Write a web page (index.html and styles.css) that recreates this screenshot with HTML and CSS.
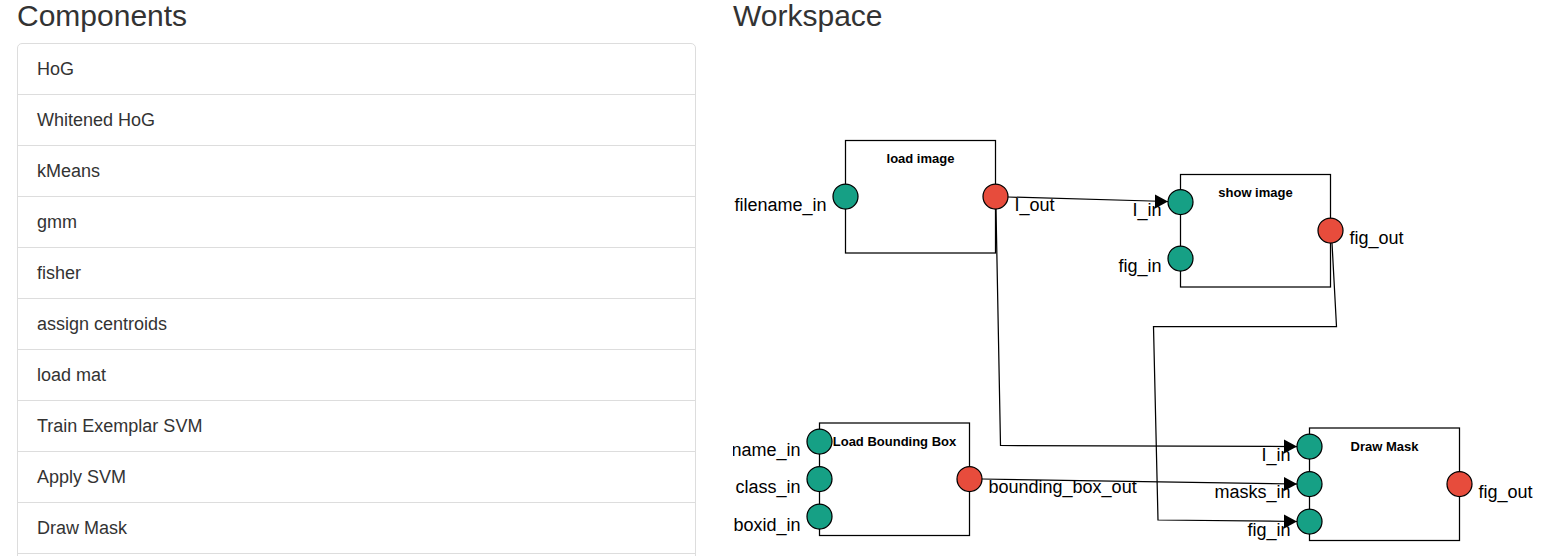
FILE: index.html
```
<!DOCTYPE html>
<html lang="en">
<head>
<meta charset="utf-8">
<title>Workspace</title>
<link rel="stylesheet" href="styles.css">
</head>
<body>
<main class="layout">
  <section class="panel">
    <h3 class="heading">Components</h3>
    <ul class="list">
      <li class="item">HoG</li>
      <li class="item">Whitened HoG</li>
      <li class="item">kMeans</li>
      <li class="item">gmm</li>
      <li class="item">fisher</li>
      <li class="item">assign centroids</li>
      <li class="item">load mat</li>
      <li class="item">Train Exemplar SVM</li>
      <li class="item">Apply SVM</li>
      <li class="item">Draw Mask</li>
      <li class="item"></li>
    </ul>
  </section>
  <section class="panel">
    <h3 class="heading">Workspace</h3>
    <svg class="canvas" role="group" aria-label="Workspace diagram">
      <defs>
        <marker id="arrow" markerUnits="userSpaceOnUse" markerWidth="14" markerHeight="16" refX="13" refY="7.5">
          <path d="M0 0.5L13 7.5L0 14.5Z"/>
        </marker>
      </defs>

      <g class="node" transform="translate(112.5 97.5)">
        <rect class="box" width="150" height="112.5"/>
        <text class="title" x="75" y="22">load image</text>
        <text class="label label-in" x="-19" y="70">filename_in</text>
        <text class="label" x="169" y="70">I_out</text>
      </g>
      <g class="node" transform="translate(447.5 131.5)">
        <rect class="box" width="150" height="112.5"/>
        <text class="title" x="75" y="22">show image</text>
        <text class="label label-in" x="-19" y="41">I_in</text>
        <text class="label label-in" x="-19" y="97">fig_in</text>
        <text class="label" x="169" y="69">fig_out</text>
      </g>
      <g class="node" transform="translate(86.5 380)">
        <rect class="box" width="150" height="112.5"/>
        <text class="title" x="75" y="23">Load Bounding Box</text>
        <text class="label label-in" x="-19" y="33">name_in</text>
        <text class="label label-in" x="-19" y="70">class_in</text>
        <text class="label label-in" x="-19" y="108">boxid_in</text>
        <text class="label" x="169" y="70">bounding_box_out</text>
      </g>
      <g class="node" transform="translate(576.5 385)">
        <rect class="box" width="150" height="112.5"/>
        <text class="title" x="75" y="23">Draw Mask</text>
        <text class="label label-in" x="-19" y="33">I_in</text>
        <text class="label label-in" x="-19" y="70">masks_in</text>
        <text class="label label-in" x="-19" y="108">fig_in</text>
        <text class="label" x="169" y="70">fig_out</text>
      </g>

      <polyline class="edge" points="275,154 435,158.5"/>
      <polyline class="edge" points="263,166 267.5,402.5 564,403.5"/>
      <polyline class="edge" points="599,200 603.5,283.5 420.5,283.5 425,477 564,478.5"/>
      <polyline class="edge" points="249,436 564,441"/>

      <g class="ports-in">
        <circle cx="112.5" cy="153.5" r="12.5"/>
        <circle cx="447.5" cy="159" r="12.5"/>
        <circle cx="447.5" cy="215.5" r="12.5"/>
        <circle cx="86.5" cy="398.5" r="12.5"/>
        <circle cx="86.5" cy="436" r="12.5"/>
        <circle cx="86.5" cy="473.5" r="12.5"/>
        <circle cx="576.5" cy="403.5" r="12.5"/>
        <circle cx="576.5" cy="441" r="12.5"/>
        <circle cx="576.5" cy="478.5" r="12.5"/>
      </g>
      <g class="ports-out">
        <circle cx="262.5" cy="153.5" r="12.5"/>
        <circle cx="597.5" cy="187.5" r="12.5"/>
        <circle cx="236.5" cy="436" r="12.5"/>
        <circle cx="726.5" cy="441" r="12.5"/>
      </g>
    </svg>
  </section>
</main>
</body>
</html>
```
FILE: styles.css
```
* {
  box-sizing: border-box;
}

body {
  margin: 0;
  background: #fff;
  color: #333;
  font-family: "Liberation Sans", Arial, sans-serif;
  font-size: 18px;
  line-height: 26px;
}

.layout {
  display: grid;
  grid-template-columns: minmax(0, 679fr) minmax(0, 819fr);
  gap: 37px;
  height: 100vh;
  padding-left: 17px;
  overflow: hidden;
}

.panel {
  display: flex;
  flex-direction: column;
  min-height: 0;
}

.heading {
  margin: 0 0 12px;
  font-size: 30px;
  font-weight: 400;
  line-height: 31px;
}

.list {
  margin: 0;
  padding: 0;
  list-style: none;
  border: 1px solid #ddd;
  border-radius: 5px;
}

.item {
  min-height: 50px;
  padding: 12px 19px;
}

.item + .item {
  border-top: 1px solid #ddd;
}

.canvas {
  flex: 1;
  width: 100%;
  min-height: 0;
  overflow: hidden;
}

.box {
  fill: #fff;
  stroke: #000;
  stroke-width: 1.25;
}

.title {
  fill: #000;
  font-size: 13px;
  font-weight: 700;
  text-anchor: middle;
}

.label {
  fill: #000;
  font-size: 18px;
}

.label-in {
  text-anchor: end;
}

.edge {
  fill: none;
  stroke: #000;
  stroke-width: 1.25;
  marker-end: url(#arrow);
}

.ports-in circle {
  fill: #16a085;
  stroke: #000;
  stroke-width: 1.25;
}

.ports-out circle {
  fill: #e74c3c;
  stroke: #000;
  stroke-width: 1.25;
}
```
